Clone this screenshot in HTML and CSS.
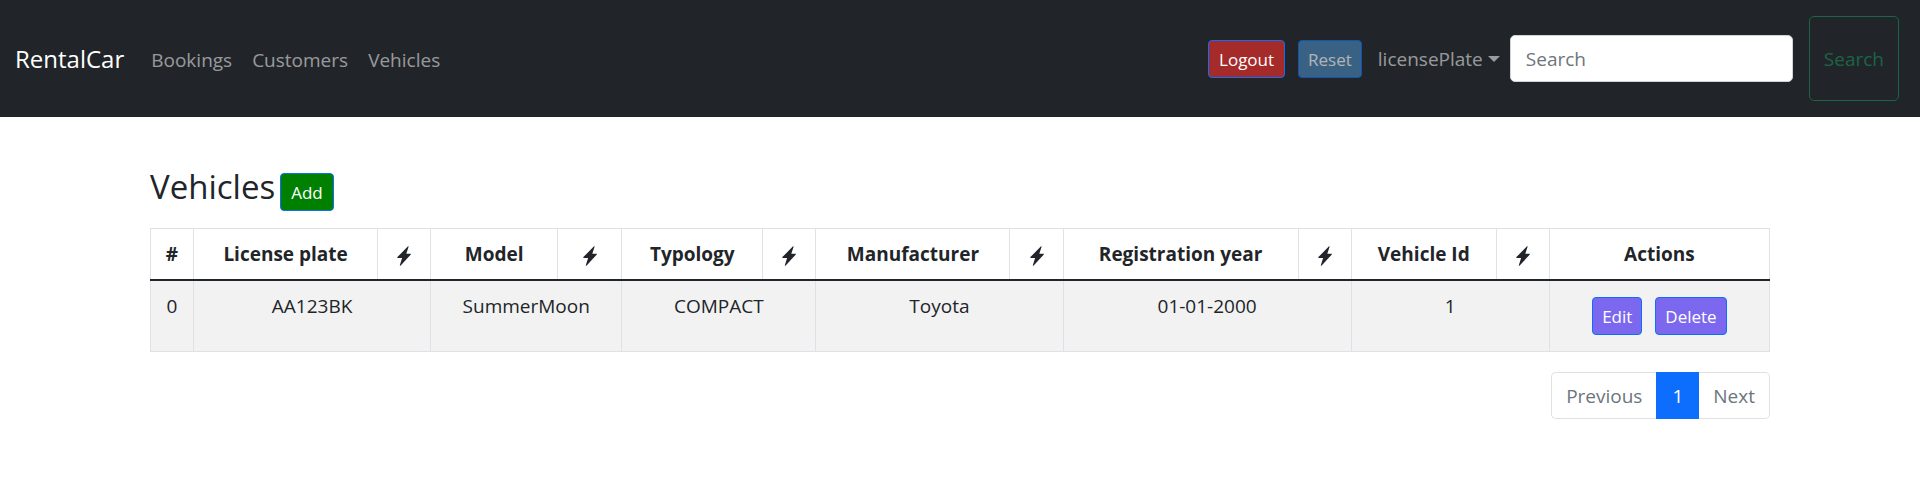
FILE: index.html
```html
<!DOCTYPE html>
<html lang="en">
<head>
<meta charset="utf-8">
<meta name="viewport" content="width=device-width, initial-scale=1">
<title>RentalCar</title>
<link rel="stylesheet" href="styles.css">
</head>
<body>
<svg class="sprite" aria-hidden="true">
  <symbol id="bolt" viewBox="0 0 14 20">
    <path d="M11 0.3Q11.800 0 11.500 1L9.300 7.800H13.400Q14.200 8 13.600 8.800L3.700 19.500Q2.600 20.200 2.900 19L5.100 12.100H0.700Q-0.100 11.800 0.400 11.100Z"/>
  </symbol>
</svg>

<header class="navbar">
  <a class="brand" href="#">RentalCar</a>
  <nav class="nav">
    <a class="nav-link" href="#">Bookings</a>
    <a class="nav-link" href="#">Customers</a>
    <a class="nav-link" href="#">Vehicles</a>
  </nav>
  <div class="tools">
    <button class="btn btn-logout" type="button">Logout</button>
    <button class="btn btn-reset" type="button" disabled>Reset</button>
    <div class="dropdown">
      <select class="dropdown-select" aria-label="Search field">
        <option>licensePlate</option>
        <option>model</option>
        <option>typology</option>
      </select>
      <span class="caret"></span>
    </div>
    <form class="search">
      <input class="search-input" type="search" placeholder="Search" aria-label="Search">
      <button class="search-btn" type="submit" disabled>Search</button>
    </form>
  </div>
</header>

<main class="container">
  <div class="heading">
    <h1 class="title">Vehicles</h1>
    <button class="btn btn-add" type="button">Add</button>
  </div>

  <table class="table">
    <colgroup>
      <col class="c-index">
      <col class="c-plate"><col class="c-sort">
      <col class="c-model"><col class="c-sort-wide">
      <col class="c-typology"><col class="c-sort">
      <col class="c-maker"><col class="c-sort">
      <col class="c-year"><col class="c-sort">
      <col class="c-id"><col class="c-sort">
      <col class="c-actions">
    </colgroup>
    <thead>
      <tr>
        <th scope="col">#</th>
        <th scope="col">License plate</th>
        <th><button class="sort" type="button" aria-label="Sort by license plate"><svg class="bolt"><use href="#bolt"/></svg></button></th>
        <th scope="col">Model</th>
        <th><button class="sort" type="button" aria-label="Sort by model"><svg class="bolt"><use href="#bolt"/></svg></button></th>
        <th scope="col">Typology</th>
        <th><button class="sort" type="button" aria-label="Sort by typology"><svg class="bolt"><use href="#bolt"/></svg></button></th>
        <th scope="col">Manufacturer</th>
        <th><button class="sort" type="button" aria-label="Sort by manufacturer"><svg class="bolt"><use href="#bolt"/></svg></button></th>
        <th scope="col">Registration year</th>
        <th><button class="sort" type="button" aria-label="Sort by registration year"><svg class="bolt"><use href="#bolt"/></svg></button></th>
        <th scope="col">Vehicle Id</th>
        <th><button class="sort" type="button" aria-label="Sort by vehicle id"><svg class="bolt"><use href="#bolt"/></svg></button></th>
        <th scope="col">Actions</th>
      </tr>
    </thead>
    <tbody>
      <tr>
        <td>0</td>
        <td colspan="2">AA123BK</td>
        <td colspan="2">SummerMoon</td>
        <td colspan="2">COMPACT</td>
        <td colspan="2">Toyota</td>
        <td colspan="2">01-01-2000</td>
        <td colspan="2">1</td>
        <td>
          <div class="actions">
            <button class="btn btn-action" type="button">Edit</button>
            <button class="btn btn-action" type="button">Delete</button>
          </div>
        </td>
      </tr>
    </tbody>
  </table>

  <nav class="pagination" aria-label="Pages">
    <a class="page" href="#">Previous</a>
    <a class="page page-active" href="#" aria-current="page">1</a>
    <a class="page" href="#">Next</a>
  </nav>
</main>
</body>
</html>
```
FILE: styles.css
```css
*, *::before, *::after { box-sizing: border-box; }

body {
  margin: 0;
  background: #fff;
  color: #212529;
  font-family: "Segoe UI", "Open Sans", "Noto Sans", sans-serif;
  font-size: 19px;
  line-height: 30px;
}

button, input, select { font: inherit; }
a { text-decoration: none; }
.sprite { display: none; }

.navbar {
  display: flex;
  align-items: center;
  padding: 16px 21px 16px 15px;
  background: #212529;
}

.brand {
  margin-right: 17px;
  color: #fff;
  font-size: 24px;
  line-height: 38px;
}

.nav { display: flex; }

.nav-link {
  padding: 11px 10px 9px;
  color: rgba(255, 255, 255, .55);
}

.tools {
  display: flex;
  align-items: center;
  margin-left: auto;
}

.btn {
  padding: 6px 10px 4px;
  border: 1px solid #0d6efd;
  border-radius: 4px;
  color: #fff;
  font-size: 17px;
  line-height: 26px;
}

.btn-logout { margin-right: 13px; background: #a52a2a; }
.btn-reset { margin-right: 16px; padding-inline: 9px; background: #4682b4; opacity: .65; }
.btn-add { background: #008000; }
.btn-action { padding-inline: 9px; background: #7b68ee; }

.dropdown {
  display: flex;
  align-items: center;
  gap: 5px;
  margin-right: 10px;
  color: rgba(255, 255, 255, .55);
}

.dropdown-select {
  appearance: none;
  padding: 1px 0 0;
  border: 0;
  background: transparent;
  color: inherit;
  line-height: 30px;
}

.caret {
  border-top: 6px solid currentColor;
  border-left: 6px solid transparent;
  border-right: 6px solid transparent;
}

.search {
  display: flex;
  align-items: center;
  gap: 16px;
}

.search-input {
  appearance: none;
  width: 283px;
  padding: 8px 15px 7px;
  border: 1px solid #ced4da;
  border-radius: 5px;
  background: #fff;
  color: #212529;
  line-height: 30px;
}

.search-input::placeholder { color: #6c757d; opacity: 1; }

.search-btn {
  padding: 27px 14px 26px;
  border: 1px solid #198754;
  border-radius: 5px;
  background: transparent;
  color: #198754;
  opacity: .65;
}

.container {
  max-width: 1650px;
  margin: 0 auto;
  padding: 49px 15px 0;
}

.heading {
  display: flex;
  align-items: baseline;
  gap: 5px;
  margin-bottom: 17px;
}

.title {
  margin: 0;
  font-size: 33px;
  font-weight: 400;
  line-height: 42px;
}

.table {
  width: 100%;
  margin-bottom: 20px;
  border-collapse: collapse;
  table-layout: fixed;
  text-align: center;
}

.table tr { border: 1px solid #dee2e6; }
.table th, .table td {
  padding: 10px 0;
  border: 0 solid #dee2e6;
  border-width: 0 1px;
  vertical-align: top;
}
.table th { font-weight: 700; }
.table tbody { border-top: 2px solid #212529; }
.table tbody td { background: #f2f2f2; }

.c-index { width: 43px; }
.c-plate { width: 184px; }
.c-model { width: 127px; }
.c-typology { width: 141px; }
.c-maker { width: 194px; }
.c-year { width: 235px; }
.c-id { width: 145px; }
.c-actions { width: 220px; }
.c-sort { width: 53px; }
.c-sort-wide { width: 64px; }

.sort {
  display: flex;
  align-items: center;
  justify-content: center;
  width: 100%;
  height: 30px;
  padding: 4px 0 0;
  border: 0;
  background: transparent;
  color: inherit;
}

.bolt {
  width: 14px;
  height: 20px;
  fill: currentColor;
}

.actions {
  display: flex;
  justify-content: center;
  gap: 13px;
  padding: 6px 0;
}

.pagination {
  display: flex;
  justify-content: flex-end;
}

.page {
  padding: 8px 14px 7px;
  border: 1px solid #dee2e6;
  color: #6c757d;
}

.page:first-child { border-right: 0; border-radius: 5px 0 0 5px; }
.page:last-child { border-left: 0; border-radius: 0 5px 5px 0; }

.page-active {
  padding-inline: 15px;
  border-color: #0d6efd;
  background: #0d6efd;
  color: #fff;
}
```
